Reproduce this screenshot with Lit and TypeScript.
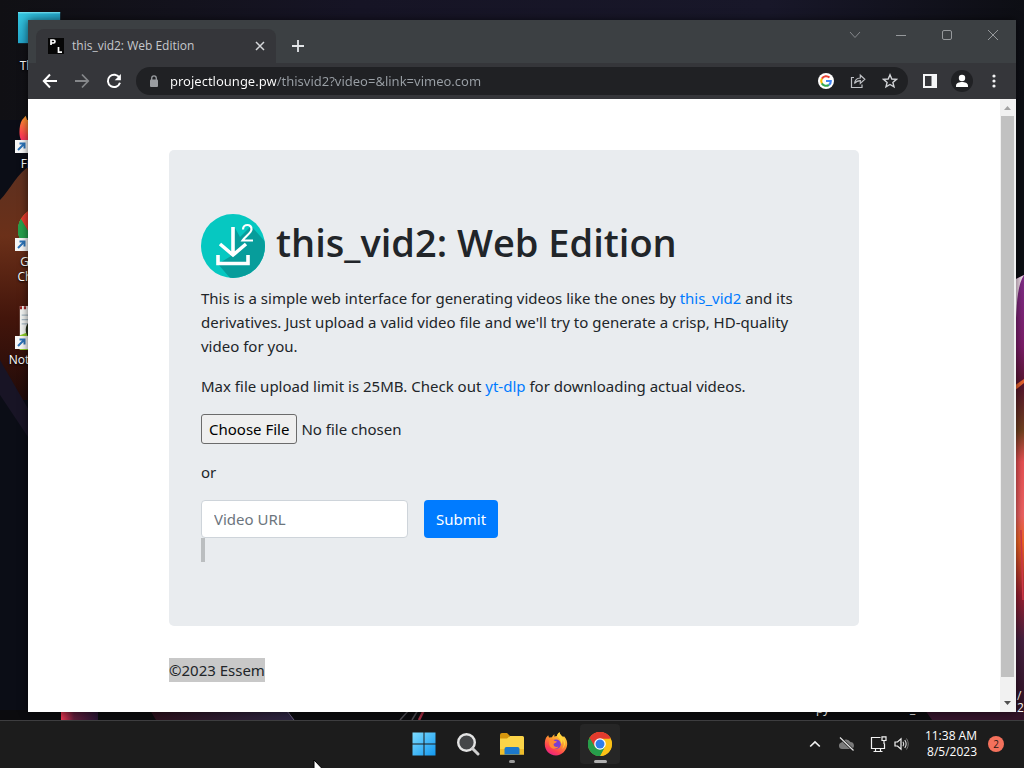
import { LitElement, html, svg, css } from "lit";
import { customElement, property } from "lit/decorators.js";

const chromeLogo = svg`
  <circle cx="12" cy="12" r="12" fill="#fbc116"/>
  <path d="M12 12 1.6 6A12 12 0 0 1 22.4 6Z" fill="#e33b2e"/>
  <path d="M1.6 6A12 12 0 0 0 12 24L17.2 15 12 12Z" fill="#269e4b"/>
  <path d="M12 6.5H22.6A12 12 0 0 1 12 24L17 14.8Z" fill="#fbc116"/>
  <path d="M1.6 6 7 15.2 12 12 12 6.5H22.6L22.4 6A12 12 0 0 0 1.6 6Z" fill="#e33b2e"/>
  <path d="M1.6 6 6.8 15A6 6 0 0 0 16 16.5L12 24A12 12 0 0 1 1.6 6Z" fill="#269e4b"/>
  <circle cx="12" cy="12" r="5.8" fill="#fff"/>
  <circle cx="12" cy="12" r="4.5" fill="#2f7de9"/>`;

const firefoxLogo = svg`
  <defs>
    <linearGradient id="ff" x1="0.8" y1="0" x2="0.25" y2="1">
      <stop offset="0" stop-color="#ffe14a"/><stop offset="0.4" stop-color="#ff9a2e"/>
      <stop offset="0.75" stop-color="#ff4250"/><stop offset="1" stop-color="#e5208a"/>
    </linearGradient>
  </defs>
  <path d="M2.2 5.5 4.2 3.2 5 5.4 8 5.2C8.5 3.8 9.6 2.9 10.6 2.6L10.2 4.4 13 4C13.4 2.4 14.2 1 15.5 0.2 15.8 2.4 17.4 3.4 18.6 4.8L20.3 4.6C22.6 7 23.4 10 23.2 12.5 22.7 18.5 18 23.4 12 23.4 5.5 23.4 0.8 18.4 0.8 12.2 0.8 9.6 1.2 7.2 2.2 5.5Z" fill="url(#ff)"/>
  <circle cx="12" cy="12.2" r="4.8" fill="#7a3fd0"/>
  <path d="M5.2 8.2C7 6.6 9.4 7.4 10.4 8.8L13 9.4C12.2 11 10.2 10.8 9.6 12 9.4 14.4 12 15.6 14.6 14.6 12 18.4 5.6 17 5.2 12Z" fill="#ff8a32"/>
  <path d="M12.8 4.2C14.6 5.6 17.4 8 17 12 18.8 10.8 18.6 8.8 18.2 7.6 20.6 9.8 20.4 14 18 17 22 14 22 8.4 18.6 4.8 17.2 3.4 15.8 2.6 15.5 0.2 14.2 1 13.2 2.6 12.8 4.2Z" fill="#ffd43c"/>`;

const pcIcon = svg`
  <defs><linearGradient id="pc" x1="0" y1="0" x2="1" y2="1">
    <stop offset="0" stop-color="#35c8e0"/><stop offset="1" stop-color="#1686b4"/></linearGradient></defs>
  <rect x="0" y="0" width="23" height="17" fill="url(#pc)"/>
  <path d="M0 .4H23" stroke="#7be3f2" stroke-width=".6"/>`;

const notepadIcon = svg`
  <rect x="1" y="0" width="22" height="24" fill="#f2f4f2"/>
  <path d="M1 1H23" stroke="#9c2525" stroke-width="1.6" stroke-dasharray="1.2 1"/>
  <path d="M2 5H22M2 7.4H22M2 9.800H22" stroke="#a9bbc6" stroke-width=".7"/>
  <path d="M1 16 9 13 23 15V24H1Z" fill="#8fd02b"/>
  <circle cx="10" cy="13" r="5" fill="#b8dc6a" stroke="#27331d" stroke-width="1.6"/>
  <path d="M10 10v6M7 13h6" stroke="#27331d"/>`;

@customElement("desktop-wallpaper")
class DesktopWallpaper extends LitElement {
  static styles = css`
    :host { display: block; }
    svg { display: block; width: 100%; height: 100%; }
  `;
  render() {
    return html`<svg viewBox="0 0 1024 720" preserveAspectRatio="none" aria-hidden="true">
      <defs>
        <linearGradient id="sky"><stop offset="0" stop-color="#101014"/><stop offset=".35" stop-color="#161425"/><stop offset=".75" stop-color="#181729"/><stop offset="1" stop-color="#0d0e14"/></linearGradient>
        <linearGradient id="petal" x1="0" y1="0" x2="0" y2="1"><stop offset="0" stop-color="#5c3020"/><stop offset=".3" stop-color="#6b3019"/><stop offset=".65" stop-color="#43150b"/><stop offset="1" stop-color="#210b09"/></linearGradient>
        <linearGradient id="side" x1="0" y1="0" x2="0" y2="1"><stop offset="0" stop-color="#7e2d86"/><stop offset=".16" stop-color="#7b1c68"/><stop offset=".25" stop-color="#55152c"/><stop offset=".35" stop-color="#71411f"/><stop offset=".42" stop-color="#e85053"/><stop offset=".54" stop-color="#ed6262"/><stop offset=".6" stop-color="#ee6423"/><stop offset=".72" stop-color="#971f31"/><stop offset=".82" stop-color="#45203f"/><stop offset="1" stop-color="#2b1020"/></linearGradient>
        <linearGradient id="glow"><stop offset="0" stop-color="#e5344f"/><stop offset=".35" stop-color="#5d1d38"/><stop offset="1" stop-color="#271431"/></linearGradient>
        <linearGradient id="dusk"><stop offset="0" stop-color="#2b101b"/><stop offset="1" stop-color="#2b2440"/></linearGradient>
      </defs>
      <rect width="1024" height="720" fill="url(#sky)"/>
      <rect y="120" width="30" height="600" fill="#0b0d16"/>
      <path d="M0 200C10 190 18 172 30 166V400H12L0 368Z" fill="url(#petal)"/>
      <path d="M0 360 30 412V440L0 395Z" fill="#181425"/>
      <path d="M1014 100H1024V276L1014 282Z" fill="#0c0e13"/>
      <path d="M1014 280 1024 275V720H1014Z" fill="url(#side)"/>
      <path d="M1014 280 1024 275C1018 284 1017 300 1016 318Z" fill="#edd8e6"/>
      <path d="M1014 386 1024 379V383L1014 391Z" fill="#e5622f"/>
      <path d="M1021 530 1023 600" stroke="#d23b4b" stroke-width="1.5"/>
      <rect y="710" width="1024" height="10" fill="#0b0b0e"/>
      <rect x="61" y="710" width="37" height="10" fill="url(#glow)"/>
      <path d="M150 710H287L294 720H156Z" fill="url(#dusk)"/>
      <path d="M287 711 294 720" stroke="#665d79"/>
      <path d="M400 720 409 710M412 720 418 710" stroke="#4b4a50" stroke-width="1.5"/>
      <path d="M419 720 424 710" stroke="#a02c40" stroke-width="2.5"/>
      <path d="M925 710H1024V720H932Z" fill="#33142a"/>
    </svg>`;
  }
}

@customElement("desktop-shortcut")
class DesktopShortcut extends LitElement {
  @property() label = "";
  @property() icon = "";
  @property({ type: Boolean }) linked = false;
  static styles = css`
    :host { display: block; height: 98px; }
    .item {
      all: unset; position: relative; display: flex; flex-direction: column; align-items: center;
      font: 12px/15px "Open Sans", "Noto Sans", sans-serif; color: #fff; text-align: center;
      text-shadow: 0 1px 2px #000; width: 100%;
    }
    .art { width: 44px; height: 44px; }
    .text { margin-top: 2px; }
    .arrow { position: absolute; left: 13px; top: 30px; width: 13px; height: 13px; }
  `;
  render() {
    const art = { pc: pcIcon, firefox: firefoxLogo, chrome: chromeLogo, notepad: notepadIcon }[this.icon];
    return html`<button class="item">
      <svg class="art" viewBox="0 0 24 24" aria-hidden="true">${art}</svg>
      ${this.linked
        ? html`<svg class="arrow" viewBox="0 0 13 13" aria-hidden="true"><rect width="13" height="13" fill="#f7f7f7"/><path d="M3 10 9 4M4.500 3.500H9.500V8.500" fill="none" stroke="#2c73b8" stroke-width="2"/></svg>`
        : ""}
      <span class="text">${this.label}</span>
    </button>`;
  }
}

@customElement("browser-bar")
class BrowserBar extends LitElement {
  static styles = css`
    :host { display: block; background: #3c4043; font-family: "Open Sans", "Noto Sans", sans-serif; }
    button { all: unset; display: grid; place-items: center; flex: none; }
    svg { display: block; fill: none; }
    .titles { display: flex; height: 43px; padding-left: 8px; }
    .tab {
      display: flex; align-items: center; box-sizing: border-box; width: 240px; height: 34px; margin-top: 9px;
      padding: 0 8px 0 12px; border-radius: 8px 8px 0 0; background: #35363a; color: #c6c8cc; font-size: 12px;
    }
    .name { flex: 1; margin-left: 8px; padding-bottom: 1px; }
    .close { width: 16px; height: 16px; }
    .add { width: 28px; height: 28px; margin: 12px 0 0 8px; }
    .controls { display: flex; margin-left: auto; height: 30px; }
    .controls button { width: 46px; }
    .tools { display: flex; align-items: center; height: 36px; background: #35363a; padding: 0 6px; }
    .tools > button { width: 32px; height: 28px; }
    .address {
      flex: 1; display: flex; align-items: center; height: 28px; border-radius: 14px; background: #202124;
      margin: 0 6px; padding: 0 2px 0 12px;
    }
    .address button { width: 32px; height: 28px; }
    .url {
      flex: 1; min-width: 0; border: 0; padding: 0; outline: 0; margin-left: 10px; height: 24px;
      font: 13px/24px "Noto Sans", "Open Sans", sans-serif; color: transparent;
      background: linear-gradient(to right, #fff 106px, #9aa0a6 0); -webkit-background-clip: text; background-clip: text;
    }
  `;
  render() {
    return html`
      <div class="titles">
        <div class="tab">
          <svg width="16" height="16" viewBox="0 0 16 16" aria-hidden="true"><rect width="16" height="16" fill="#060606"/><path d="M3 7V2H5.500A1.500 1.500 0 0 1 5.500 5H3M10.500 9V14.200H14" stroke="#fff" stroke-width="1.700"/></svg>
          <span class="name">this_vid2: Web Edition</span>
          <button class="close" aria-label="Close tab"><svg width="10" height="10" viewBox="0 0 10 10"><path d="M1 1 9 9M9 1 1 9" stroke="#d5d7da" stroke-width="1.500"/></svg></button>
        </div>
        <button class="add" aria-label="New tab"><svg width="12" height="12" viewBox="0 0 12 12"><path d="M6 0V12M0 6H12" stroke="#e3e5e8" stroke-width="1.800"/></svg></button>
        <div class="controls">
          <button aria-label="Search tabs"><svg width="12" height="12" viewBox="0 0 12 12"><path d="M1 3 6 8.500 11 3" stroke="#85888c"/></svg></button>
          <button aria-label="Minimize"><svg width="12" height="12" viewBox="0 0 12 12"><path d="M1 6.500H11" stroke="#96999c"/></svg></button>
          <button aria-label="Maximize"><svg width="12" height="12" viewBox="0 0 12 12"><rect x="1.500" y="1.500" width="9" height="9" rx="1.500" stroke="#96999c"/></svg></button>
          <button aria-label="Close"><svg width="12" height="12" viewBox="0 0 12 12"><path d="M1 1 11 11M11 1 1 11" stroke="#96999c"/></svg></button>
        </div>
      </div>
      <div class="tools">
        <button aria-label="Back"><svg width="16" height="16" viewBox="0 0 16 16"><path d="M15 8H2M8 1.500 1.800 8 8 14.500" stroke="#fff" stroke-width="2"/></svg></button>
        <button aria-label="Forward"><svg width="16" height="16" viewBox="0 0 16 16"><path d="M1 8H14M8 1.500 14.200 8 8 14.500" stroke="#85878a" stroke-width="1.800"/></svg></button>
        <button aria-label="Reload"><svg width="16" height="16" viewBox="0 0 16 16"><path d="M13.500 4.800A6.200 6.200 0 1 0 14 9.800" stroke="#fff" stroke-width="2"/><path d="M14.900 1V7.200H8.700Z" fill="#fff"/></svg></button>
        <div class="address">
          <svg width="12" height="12" viewBox="0 0 12 12" aria-hidden="true"><rect x="2" y="4.500" width="8" height="7.500" rx="1" fill="#9a9da1"/><path d="M3.700 5V3.200a2.300 2.300 0 0 1 4.600 0V5" stroke="#9a9da1" stroke-width="1.300"/></svg>
          <input class="url" aria-label="Address" .value=${"projectlounge.pw/thisvid2?video=&link=vimeo.com"} />
          <button aria-label="Search with Google"><svg width="16" height="16" viewBox="0 0 16 16"><circle cx="8" cy="8" r="8" fill="#fff"/><g stroke-width="2.100"><path d="M3.900 5.600A4.900 4.900 0 0 1 11.500 4.600" stroke="#ea4335"/><path d="M3.900 5.500A4.900 4.900 0 0 0 3.900 10.500" stroke="#fbbc05"/><path d="M3.800 10.400A4.900 4.900 0 0 0 11 11.800" stroke="#34a853"/><path d="M8 8H12.800A4.900 4.900 0 0 1 11 11.900" stroke="#4285f4"/></g></svg></button>
          <button aria-label="Share"><svg width="16" height="16" viewBox="0 0 16 16"><path d="M4 4.500H1.500V14.500H12V11.500M4.500 10.500C5 7 7 5 10.300 5V2.200L14.800 6.300 10.300 10.400V7.600C7.800 7.600 6 8.500 4.500 10.500Z" stroke="#bfc1c5" stroke-width="1.200"/></svg></button>
          <button aria-label="Bookmark"><svg width="16" height="16" viewBox="0 0 16 16"><path d="M8 1.800 9.800 6 14.400 6.400 10.900 9.400 12 13.900 8 11.500 4 13.900 5.100 9.400 1.600 6.400 6.200 6Z" stroke="#d2d4d7" stroke-width="1.400"/></svg></button>
        </div>
        <button aria-label="Side panel"><svg width="14" height="14" viewBox="0 0 14 14"><rect x="1" y="1" width="12" height="12" stroke="#f5f6f7" stroke-width="2"/><path d="M8.500 1H13V13H8.500Z" fill="#f5f6f7"/></svg></button>
        <button aria-label="Profile"><svg width="22" height="22" viewBox="0 0 22 22"><circle cx="11" cy="11" r="11" fill="#202124"/><circle cx="11" cy="8" r="3.200" fill="#fff"/><path d="M5 17V15.500C5 13 8.500 12 11 12S17 13 17 15.500V17Z" fill="#fff"/></svg></button>
        <button aria-label="Menu"><svg width="4" height="14" viewBox="0 0 4 14"><circle cx="2" cy="2" r="1.600" fill="#f2f3f4"/><circle cx="2" cy="7" r="1.600" fill="#f2f3f4"/><circle cx="2" cy="12" r="1.600" fill="#f2f3f4"/></svg></button>
      </div>`;
  }
}

@customElement("web-page")
class WebPage extends LitElement {
  static styles = css`
    :host {
      display: flex; min-height: 0; background: #fff; color: #212529;
      font: 15px/24px "Noto Sans", "Open Sans", sans-serif;
    }
    .body { flex: 1; min-width: 0; overflow: hidden; }
    .container { max-width: 690px; margin: 0 auto; padding: 51px 15px 0; }
    .hero { background: #e9ecef; border-radius: 5px; padding: 64px 32px; margin-bottom: 32px; }
    h1 {
      display: flex; align-items: center; gap: 11px; margin: 0 0 8px;
      font: 600 38px/56px "Open Sans", "Noto Sans", sans-serif;
    }
    .logo { flex: none; width: 64px; height: 64px; }
    .title { white-space: nowrap; margin-bottom: 8px; }
    p { margin: 0 0 16px; }
    a { color: #007bff; text-decoration: none; }
    .file { display: block; margin: 0 0 16px; font: inherit; color: inherit; }
    .file::file-selector-button {
      font: inherit; line-height: 24px; color: #000; height: 30px; padding: 1px 7px; background: #efefef;
      border: 1px solid #6b6b6b; border-radius: 3px; margin-inline-end: 4px;
    }
    .row { display: flex; gap: 16px; }
    .field {
      box-sizing: border-box; width: 207px; height: 38px; padding: 6px 12px; font: inherit;
      border: 1px solid #ced4da; border-radius: 4px; background: #fff; color: #495057;
    }
    .field::placeholder { color: #6c757d; opacity: 1; }
    .submit {
      height: 38px; padding: 6px 12px; border: 0; border-radius: 4px; background: #007bff; color: #fff; font: inherit;
    }
    .mark { display: block; width: 4px; height: 24px; background: #bbbec0; }
    .credit { background: #c8c8c8; display: inline-block; }
    .scroll { flex: none; width: 15px; display: flex; flex-direction: column; background: #f1f1f1; padding-right: 1px; }
    .scroll svg { display: block; flex: none; width: 15px; height: 17px; }
    .thumb { background: #c1c1c1; width: 13px; margin-left: 1px; flex: 1; margin-bottom: 18px; }
  `;
  render() {
    return html`
      <main class="body"><div class="container">
        <section class="hero">
          <h1>
            <svg class="logo" viewBox="0 0 64 64" aria-hidden="true">
              <defs><clipPath id="disc"><circle cx="32" cy="32" r="32"/></clipPath></defs>
              <circle cx="32" cy="32" r="32" fill="#06c8c1"/>
              <path d="M34 14 39 23 50 12 70 34V64H29L17 50 30 42 20 32 31 37Z" fill="#079d9b" clip-path="url(#disc)"/>
              <path d="M32 13V40M19 30 32 41 45 30M17 41V49.500H47V41" fill="none" stroke="#fff" stroke-width="3.600"/>
              <path d="M42 15.500C42 9.500 51 9.500 50.500 15.500 50.300 19 44 22.500 41.500 26.500H52" fill="none" stroke="#fff" stroke-width="2.200"/>
            </svg>
            <span class="title">this_vid2: Web Edition</span>
          </h1>
          <p>This is a simple web interface for generating videos like the ones by <a href="#">this_vid2</a> and its derivatives. Just upload a valid video file and we'll try to generate a crisp, HD-quality video for you.</p>
          <p>Max file upload limit is 25MB. Check out <a href="#">yt-dlp</a> for downloading actual videos.</p>
          <form>
            <input class="file" type="file" aria-label="Video file" />
            <p>or</p>
            <div class="row">
              <input class="field" type="text" placeholder="Video URL" aria-label="Video URL" />
              <button class="submit" type="button">Submit</button>
            </div>
            <span class="mark"></span>
          </form>
        </section>
        <span class="credit">©2023 Essem</span>
      </div></main>
      <div class="scroll" aria-hidden="true">
        <svg viewBox="0 0 15 17"><path d="M4 11H11L7.500 7Z" fill="#a3a3a3"/></svg>
        <div class="thumb"></div>
        <svg viewBox="0 0 15 17"><path d="M4 6H11L7.500 10Z" fill="#505050"/></svg>
      </div>`;
  }
}

@customElement("task-bar")
class TaskBar extends LitElement {
  static styles = css`
    :host {
      display: grid; grid-template-columns: 1fr auto 1fr; align-items: center; box-sizing: border-box; height: 48px;
      background: #1c1c1c; border-top: 1px solid #3d3d3f; padding-bottom: 1px; color: #fff;
      font: 12px/16px "Open Sans", "Noto Sans", sans-serif;
    }
    button { all: unset; display: grid; place-items: center; flex: none; }
    svg { display: block; fill: none; }
    .apps { display: flex; grid-column: 2; gap: 4px; }
    .app { position: relative; width: 40px; height: 40px; border-radius: 4px; }
    .active { background: #262626; }
    .run { position: absolute; bottom: 1px; left: 17px; width: 6px; height: 3px; border-radius: 2px; background: #9a9a9a; }
    .active .run { left: 14px; width: 13px; background: #b0b0b0; }
    .tray { display: flex; align-items: center; justify-content: flex-end; padding-right: 20px; }
    .slot { width: 32px; height: 32px; }
    .small { width: 23px; height: 32px; margin-right: 12px; }
    .net { width: 23px; height: 32px; margin-left: 4px; }
    .clock { text-align: right; margin-right: 11px; white-space: nowrap; }
    .badge { width: 16px; height: 16px; border-radius: 8px; background: #f4715c; color: #2a1714; text-align: center; font-size: 10px; }
  `;
  render() {
    return html`
      <div class="apps">
        <button class="app" aria-label="Start"><svg width="24" height="24" viewBox="0 0 24 24"><defs><linearGradient id="w" x1="0" y1="0" x2="1" y2="1"><stop offset="0" stop-color="#7ddcff"/><stop offset="1" stop-color="#1298f0"/></linearGradient></defs><path d="M.5.5H11.500V11.500H.5ZM12.500.5H23.500V11.500H12.500ZM.5 12.500H11.500V23.500H.5ZM12.500 12.500H23.500V23.500H12.500Z" fill="url(#w)"/></svg></button>
        <button class="app" aria-label="Search"><svg width="24" height="24" viewBox="0 0 24 24"><circle cx="10.500" cy="10.500" r="8.300" fill="#444648" stroke="#e4e4e4" stroke-width="2.400"/><path d="M16.500 16.500 22 22" stroke="#cfcfcf" stroke-width="3" stroke-linecap="round"/></svg></button>
        <button class="app" aria-label="File Explorer"><svg width="26" height="24" viewBox="0 0 26 24"><path d="M1 3a2 2 0 0 1 2-2H8L10.500 3.500V8H1Z" fill="#d6960d"/><path d="M1 6.500H8L11 4H23.500A1.500 1.500 0 0 1 25 5.500V22.500H1Z" fill="#fbd448"/><path d="M1 17H25V22.500H1Z" fill="#eebd2c"/><path d="M5.500 22.500V17a2 2 0 0 1 2-2H18.500a2 2 0 0 1 2 2V22.500Z" fill="#1b78cc"/></svg><span class="run"></span></button>
        <button class="app" aria-label="Firefox"><svg width="24" height="24" viewBox="0 0 24 24">${firefoxLogo}</svg></button>
        <button class="app active" aria-label="Chrome"><svg width="24" height="24" viewBox="0 0 24 24">${chromeLogo}</svg><span class="run"></span></button>
      </div>
      <div class="tray">
        <button class="slot" aria-label="Hidden icons"><svg width="12" height="8" viewBox="0 0 12 8"><path d="M1.200 6.500 6 2 10.800 6.500" stroke="#f0f0f0" stroke-width="1.700"/></svg></button>
        <button class="slot" aria-label="OneDrive"><svg width="17" height="14" viewBox="0 0 17 14"><path d="M4 12A3.300 3.300 0 0 1 3.500 5.500 5 5 0 0 1 12.500 5 3.600 3.600 0 0 1 13.500 12Z" fill="#7a7a7a"/><path d="M2 .5 15.500 13.500" stroke="#1c1c1c" stroke-width="2.600"/><path d="M2 .5 15.500 13.500" stroke="#e6e6e6" stroke-width="1.200"/></svg></button>
        <button class="net" aria-label="Network"><svg width="17" height="17" viewBox="0 0 17 17"><path d="M10.500 1.500H1.500V12.500H14.500V7.500M5.500 12.500V15.500M10.500 12.500V15.500M3.500 15.500H12.500M12 .8H16V4.500H12ZM14 4.500V8" stroke="#f2f2f2" stroke-width="1.200"/></svg></button>
        <button class="small" aria-label="Volume"><svg width="15" height="14" viewBox="0 0 15 14"><path d="M1 5H3.500L7 1.800V12.200L3.500 9H1Z" stroke="#f2f2f2" stroke-width="1.200"/><path d="M9 4.800Q10.500 7 9 9.200M10.800 3Q13.500 7 10.800 11" stroke="#e0e0e0" stroke-width="1.100"/><path d="M12.500 1.500Q16 7 12.500 12.500" stroke="#777"/></svg></button>
        <div class="clock"><div>11:38 AM</div><div>8/5/2023</div></div>
        <div class="badge">2</div>
      </div>`;
  }
}

@customElement("app-root")
class AppRoot extends LitElement {
  static styles = css`
    :host { display: flex; flex-direction: column; height: 100vh; overflow: hidden; position: relative; background: #0d0e14; }
    .desktop { flex: 1; position: relative; min-height: 0; overflow: hidden; }
    .paper { position: absolute; inset: 0; }
    .shortcuts { position: absolute; left: 2px; top: 12px; width: 76px; }
    .window {
      position: absolute; top: 20px; left: 28px; right: 8px; bottom: 8px; display: flex; flex-direction: column;
      box-shadow: 0 0 8px #0009;
    }
    .page { flex: 1; }
    .pointer { position: absolute; left: 313px; bottom: -10px; width: 12px; height: 19px; }
    .under { position: absolute; font: 12px/12px "Open Sans", sans-serif; color: #fff; }
    .copy { left: 816px; bottom: 5px; }
    .score { left: 910px; bottom: 5px; }
    .dash { right: 1px; bottom: 6px; width: 6px; }
  `;
  render() {
    return html`
      <div class="desktop">
        <desktop-wallpaper class="paper"></desktop-wallpaper>
        <div class="shortcuts">
          <desktop-shortcut icon="pc" label="This PC"></desktop-shortcut>
          <desktop-shortcut icon="firefox" label="Firefox" linked></desktop-shortcut>
          <desktop-shortcut icon="chrome" label="Google Chrome" linked></desktop-shortcut>
          <desktop-shortcut icon="notepad" label="Notepad++" linked></desktop-shortcut>
        </div>
        <span class="under copy">py</span>
        <span class="under score">_</span>
        <span class="under dash">/ 2</span>
        <div class="window">
          <browser-bar></browser-bar>
          <web-page class="page"></web-page>
        </div>
      </div>
      <task-bar></task-bar>
      <svg class="pointer" viewBox="0 0 12 19" aria-hidden="true"><path d="M1 1V16L4.500 12.800 7 18 9 17 6.800 12H11.500Z" fill="#fff" stroke="#000"/></svg>`;
  }
}
